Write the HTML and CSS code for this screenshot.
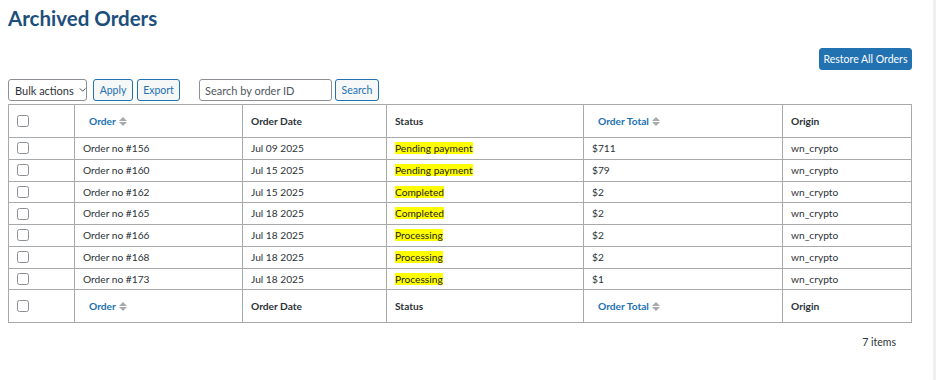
FILE: index.html
```html
<!DOCTYPE html>
<html>
<head>
<meta charset="utf-8">
<link rel="stylesheet" href="styles.css">
</head>
<body>
<div class="page">
  <div class="main">
    <h1 class="title">Archived Orders</h1>
    <div class="top-actions">
      <button class="btn-primary">Restore All Orders</button>
    </div>
    <div class="toolbar">
      <div class="select">Bulk actions <svg class="chev" width="9" height="6" viewBox="0 0 9 6"><path d="M1 1l3.5 3.5L8 1" fill="none" stroke="#2c3338" stroke-width="1.1"/></svg></div>
      <button class="btn gap6">Apply</button>
      <button class="btn gap4">Export</button>
      <div class="input">Search by order ID</div>
      <button class="btn gap3">Search</button>
    </div>
    <table class="orders">
      <thead>
        <tr>
          <th class="c-cb"><span class="cb"></span></th>
          <th class="c-order sort"><span class="lnk">Order</span> <span class="arrows"><i class="up"></i><i class="dn"></i></span></th>
          <th class="c-date">Order Date</th>
          <th class="c-status">Status</th>
          <th class="c-total sort"><span class="lnk">Order Total</span> <span class="arrows"><i class="up"></i><i class="dn"></i></span></th>
          <th class="c-origin">Origin</th>
        </tr>
      </thead>
      <tbody>
        <tr><td class="c-cb"><span class="cb"></span></td><td>Order no #156</td><td>Jul 09 2025</td><td><span class="hl">Pending payment</span></td><td>$711</td><td>wn_crypto</td></tr>
        <tr><td class="c-cb"><span class="cb"></span></td><td>Order no #160</td><td>Jul 15 2025</td><td><span class="hl">Pending payment</span></td><td>$79</td><td>wn_crypto</td></tr>
        <tr><td class="c-cb"><span class="cb"></span></td><td>Order no #162</td><td>Jul 15 2025</td><td><span class="hl">Completed</span></td><td>$2</td><td>wn_crypto</td></tr>
        <tr><td class="c-cb"><span class="cb"></span></td><td>Order no #165</td><td>Jul 18 2025</td><td><span class="hl">Completed</span></td><td>$2</td><td>wn_crypto</td></tr>
        <tr><td class="c-cb"><span class="cb"></span></td><td>Order no #166</td><td>Jul 18 2025</td><td><span class="hl">Processing</span></td><td>$2</td><td>wn_crypto</td></tr>
        <tr><td class="c-cb"><span class="cb"></span></td><td>Order no #168</td><td>Jul 18 2025</td><td><span class="hl">Processing</span></td><td>$2</td><td>wn_crypto</td></tr>
        <tr><td class="c-cb"><span class="cb"></span></td><td>Order no #173</td><td>Jul 18 2025</td><td><span class="hl">Processing</span></td><td>$1</td><td>wn_crypto</td></tr>
      </tbody>
      <tfoot>
        <tr>
          <th class="c-cb"><span class="cb"></span></th>
          <th class="sort"><span class="lnk">Order</span> <span class="arrows"><i class="up"></i><i class="dn"></i></span></th>
          <th>Order Date</th>
          <th>Status</th>
          <th class="sort"><span class="lnk">Order Total</span> <span class="arrows"><i class="up"></i><i class="dn"></i></span></th>
          <th>Origin</th>
        </tr>
      </tfoot>
    </table>
    <div class="count">7 items</div>
  </div>
  <div class="scrollbar"></div>
</div>
</body>
</html>
```

FILE: styles.css
```css
html, body {
  margin: 0;
  padding: 0;
  background: #fff;
}
body {
  font-family: "Lato", "Noto Sans", "Liberation Sans", sans-serif;
  font-size: 10.2px;
  color: #2c3338;
}
.page {
  display: flex;
  width: 936px;
  height: 380px;
  overflow: hidden;
}
.main {
  width: 904px;
  padding-left: 8px;
  flex: none;
}
.scrollbar {
  margin-left: auto;
  width: 3px;
  background: #f0f0f1;
}
.title {
  margin: 0;
  padding-top: 5px;
  font-size: 20.5px;
  line-height: 26px;
  font-weight: 700;
  color: #1d4f7c;
  font-family: "Lato", "Noto Sans", sans-serif;
}
.top-actions {
  display: flex;
  justify-content: flex-end;
  margin-top: 17px;
}
.btn-primary {
  height: 22px;
  width: 93px;
  padding: 0;
  background: #2271b1;
  color: #fff;
  border: 1px solid #2271b1;
  border-radius: 3px;
  font-family: inherit;
  font-size: 10.5px;
  white-space: nowrap;
}
.toolbar {
  display: flex;
  align-items: center;
  margin-top: 9px;
  height: 22px;
}
.select {
  box-sizing: border-box;
  width: 79px;
  height: 22px;
  border: 1px solid #8c8f94;
  border-radius: 3px;
  display: flex;
  align-items: center;
  padding-left: 6px;
  font-size: 11px;
  color: #2c3338;
  white-space: nowrap;
}
.chev {
  margin-left: 5px;
}
.btn {
  box-sizing: border-box;
  height: 22px;
  padding: 0;
  border: 1px solid #2271b1;
  border-radius: 3px;
  background: #f6f7f7;
  color: #2271b1;
  font-family: inherit;
  font-size: 10.5px;
  white-space: nowrap;
}
.gap6 { margin-left: 6px; width: 40px; }
.gap4 { margin-left: 4px; width: 43px; }
.gap3 { margin-left: 3px; width: 44px; }
.input {
  box-sizing: border-box;
  margin-left: 19px;
  width: 133px;
  height: 22px;
  border: 1px solid #8c8f94;
  border-radius: 3px;
  padding-left: 5px;
  display: flex;
  align-items: center;
  font-size: 11px;
  color: #50575e;
  white-space: nowrap;
}
.orders {
  margin-top: 3px;
  width: 904px;
  border-collapse: collapse;
  border: 1px solid #a7aaad;
  table-layout: fixed;
}
.orders th, .orders td {
  border: 1px solid #a7aaad;
  text-align: left;
  padding: 4px 8px;
  line-height: 12.75px;
  vertical-align: middle;
  white-space: nowrap;
}
.orders tbody td {
  border-top-color: #c3c4c7;
}
.orders th {
  font-weight: 700;
  height: 24px;
}
.c-cb { width: 49px; }
.c-order { width: 145px; }
.c-date { width: 127px; }
.c-status { width: 180px; }
.c-total { width: 176px; }
.cb {
  display: block;
  box-sizing: border-box;
  width: 12px;
  height: 12px;
  border: 1px solid #8c8f94;
  border-radius: 2.5px;
  background: #fff;
}
.orders th.sort {
  padding-left: 14px;
}
.lnk {
  color: #2271b1;
}
.arrows {
  display: inline-flex;
  flex-direction: column;
  vertical-align: middle;
  gap: 1px;
  margin-left: 1px;
  position: relative;
  top: -1px;
}
.arrows i {
  display: block;
  width: 0;
  height: 0;
  border-left: 4px solid transparent;
  border-right: 4px solid transparent;
}
.arrows .up { border-bottom: 4px solid #a7aaad; }
.arrows .dn { border-top: 4px solid #a7aaad; }
.hl {
  background: #ffff00;
  color: #1d2327;
}
.count {
  text-align: right;
  padding-right: 16px;
  margin-top: 13px;
  font-size: 10.5px;
  color: #2c3338;
}
```
